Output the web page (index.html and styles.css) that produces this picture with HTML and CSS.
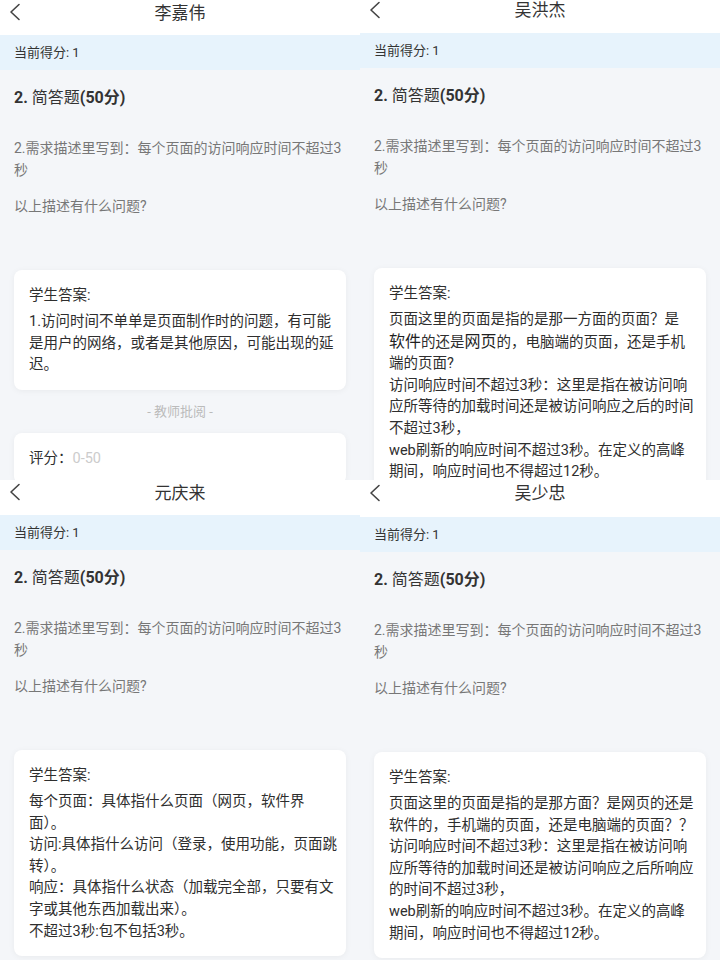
FILE: index.html
```html
<!DOCTYPE html>
<html lang="zh-CN">
<head>
    <meta charset="UTF-8">
    <meta name="viewport" content="width=device-width, initial-scale=1.0">
    <title>批阅 - 简答题</title>
    <link rel="stylesheet" href="styles.css">
</head>
<body>
    <div class="board">

        <!-- 李嘉伟 -->
        <section class="screen">
            <header class="nav">
                <svg class="nav-back" width="14" height="18" viewBox="0 0 14 18"><polyline points="11,1.5 3,9 11,16.5" fill="none" stroke="#444" stroke-width="1.6" stroke-linecap="round" stroke-linejoin="round"/></svg>
                <div class="nav-title">李嘉伟</div>
            </header>
            <div class="score-bar">当前得分: 1</div>
            <div class="content">
                <div class="q-title"><b>2.</b> 简答题<b>(50分)</b></div>
                <p class="q-desc q-desc-first">2.需求描述里写到：每个页面的访问响应时间不超过3秒</p>
                <p class="q-desc">以上描述有什么问题?</p>
                <div class="card">
                    <div class="card-label">学生答案:</div>
                    <div class="answer">1.访问时间不单单是页面制作时的问题，有可能<br>是用户的网络，或者是其他原因，可能出现的延<br>迟。</div>
                </div>
                <div class="review-label">- 教师批阅 -</div>
                <div class="card">
                    <div class="grade">评分：<span class="grade-hint">0-50</span></div>
                </div>
            </div>
        </section>

        <!-- 吴洪杰 -->
        <section class="screen screen-up">
            <header class="nav">
                <svg class="nav-back" width="14" height="18" viewBox="0 0 14 18"><polyline points="11,1.5 3,9 11,16.5" fill="none" stroke="#444" stroke-width="1.6" stroke-linecap="round" stroke-linejoin="round"/></svg>
                <div class="nav-title">吴洪杰</div>
            </header>
            <div class="score-bar">当前得分: 1</div>
            <div class="content">
                <div class="q-title"><b>2.</b> 简答题<b>(50分)</b></div>
                <p class="q-desc q-desc-first">2.需求描述里写到：每个页面的访问响应时间不超过3秒</p>
                <p class="q-desc">以上描述有什么问题?</p>
                <div class="card">
                    <div class="card-label">学生答案:</div>
                    <div class="answer">页面这里的页面是指的是那一方面的页面？是<br><span class="em">软件</span>的还是<span class="em">网页</span>的，电脑端的页面，还是手机<br>端的页面?<br>访问响应时间不超过3秒：这里是指在被访问响<br>应所等待的加载时间还是被访问响应之后的时间<br>不超过3秒，<br>web刷新的响应时间不超过3秒。在定义的高峰<br>期间，响应时间也不得超过12秒。</div>
                </div>
            </div>
        </section>

        <!-- 元庆来 -->
        <section class="screen">
            <header class="nav">
                <svg class="nav-back" width="14" height="18" viewBox="0 0 14 18"><polyline points="11,1.5 3,9 11,16.5" fill="none" stroke="#444" stroke-width="1.6" stroke-linecap="round" stroke-linejoin="round"/></svg>
                <div class="nav-title">元庆来</div>
            </header>
            <div class="score-bar">当前得分: 1</div>
            <div class="content">
                <div class="q-title"><b>2.</b> 简答题<b>(50分)</b></div>
                <p class="q-desc q-desc-first">2.需求描述里写到：每个页面的访问响应时间不超过3秒</p>
                <p class="q-desc">以上描述有什么问题?</p>
                <div class="card">
                    <div class="card-label">学生答案:</div>
                    <div class="answer">每个页面：具体指什么页面（网页，软件界<br>面）。<br>访问:具体指什么访问（登录，使用功能，页面跳<br>转）。<br>响应：具体指什么状态（加载完全部，只要有文<br>字或其他东西加载出来）。<br>不超过3秒:包不包括3秒。</div>
                </div>
            </div>
        </section>

        <!-- 吴少忠 -->
        <section class="screen screen-down">
            <header class="nav">
                <svg class="nav-back" width="14" height="18" viewBox="0 0 14 18"><polyline points="11,1.5 3,9 11,16.5" fill="none" stroke="#444" stroke-width="1.6" stroke-linecap="round" stroke-linejoin="round"/></svg>
                <div class="nav-title">吴少忠</div>
            </header>
            <div class="score-bar">当前得分: 1</div>
            <div class="content">
                <div class="q-title"><b>2.</b> 简答题<b>(50分)</b></div>
                <p class="q-desc q-desc-first">2.需求描述里写到：每个页面的访问响应时间不超过3秒</p>
                <p class="q-desc">以上描述有什么问题?</p>
                <div class="card">
                    <div class="card-label">学生答案:</div>
                    <div class="answer">页面这里的页面是指的是那方面？是网页的还是<br>软件的，手机端的页面，还是电脑端的页面？？<br>访问响应时间不超过3秒：这里是指在被访问响<br>应所等待的加载时间还是被访问响应之后所响应<br>的时间不超过3秒，<br>web刷新的响应时间不超过3秒。在定义的高峰<br>期间，响应时间也不得超过12秒。</div>
                </div>
            </div>
        </section>

    </div>
</body>
</html>
```

FILE: styles.css
```css
* {
    margin: 0;
    padding: 0;
    box-sizing: border-box;
}

body {
    font-family: Roboto, "Noto Sans CJK SC", sans-serif;
    background: #f4f6f9;
    color: #333;
}

.board {
    display: grid;
    grid-template-columns: 360px 360px;
    grid-template-rows: 480px 480px;
    width: 720px;
    height: 960px;
}

.screen {
    overflow: hidden;
    background: #f4f6f9;
}

/* 顶部导航 */
.nav {
    height: 35px;
    background: #fff;
    display: grid;
    grid-template-columns: 40px 1fr 40px;
    align-items: start;
}

.nav-back {
    margin: 3px 0 0 8px;
}

.nav-title {
    font-size: 17px;
    line-height: 26px;
    text-align: center;
    color: #333;
}

.screen-up .nav {
    height: 33px;
}

.screen-up .nav-back {
    margin-top: 1px;
}

.screen-up .nav-title {
    margin-top: -3px;
}

.screen-down .nav {
    height: 37px;
}

.screen-down .nav-back {
    margin-top: 4px;
}

.score-bar {
    height: 35px;
    line-height: 35px;
    padding-left: 14px;
    font-size: 13px;
    background: #e7f3fc;
    color: #333;
}

.content {
    padding: 0 14px;
}

.q-title {
    padding-top: 16px;
    font-size: 16px;
    line-height: 24px;
    color: #333;
}

.q-title b {
    font-weight: bold;
}

.q-desc {
    margin-top: 14px;
    font-size: 14px;
    line-height: 22px;
    color: #777;
}

.q-desc-first {
    margin-top: 27px;
}

/* 答案卡片 */
.card {
    margin-top: 53px;
    padding: 15px 8px 14px 15px;
    background: #fff;
    border-radius: 8px;
    box-shadow: 0 1px 6px rgba(0, 0, 0, 0.05);
}

.card-label {
    font-size: 14.5px;
    line-height: 22px;
    margin-bottom: 4px;
    color: #2e2e2e;
}

.answer {
    font-size: 14.5px;
    line-height: 21.6px;
    color: #2e2e2e;
}

.answer .em {
    font-size: 16px;
    color: #1f1f1f;
}

.review-label {
    margin: 13px 0 12px;
    font-size: 13px;
    line-height: 18px;
    text-align: center;
    color: #bbb;
}

.review-label + .card {
    margin-top: 0;
}

.grade {
    font-size: 14.5px;
    line-height: 22px;
    color: #2e2e2e;
}

.grade-hint {
    color: #ccc;
}
```
